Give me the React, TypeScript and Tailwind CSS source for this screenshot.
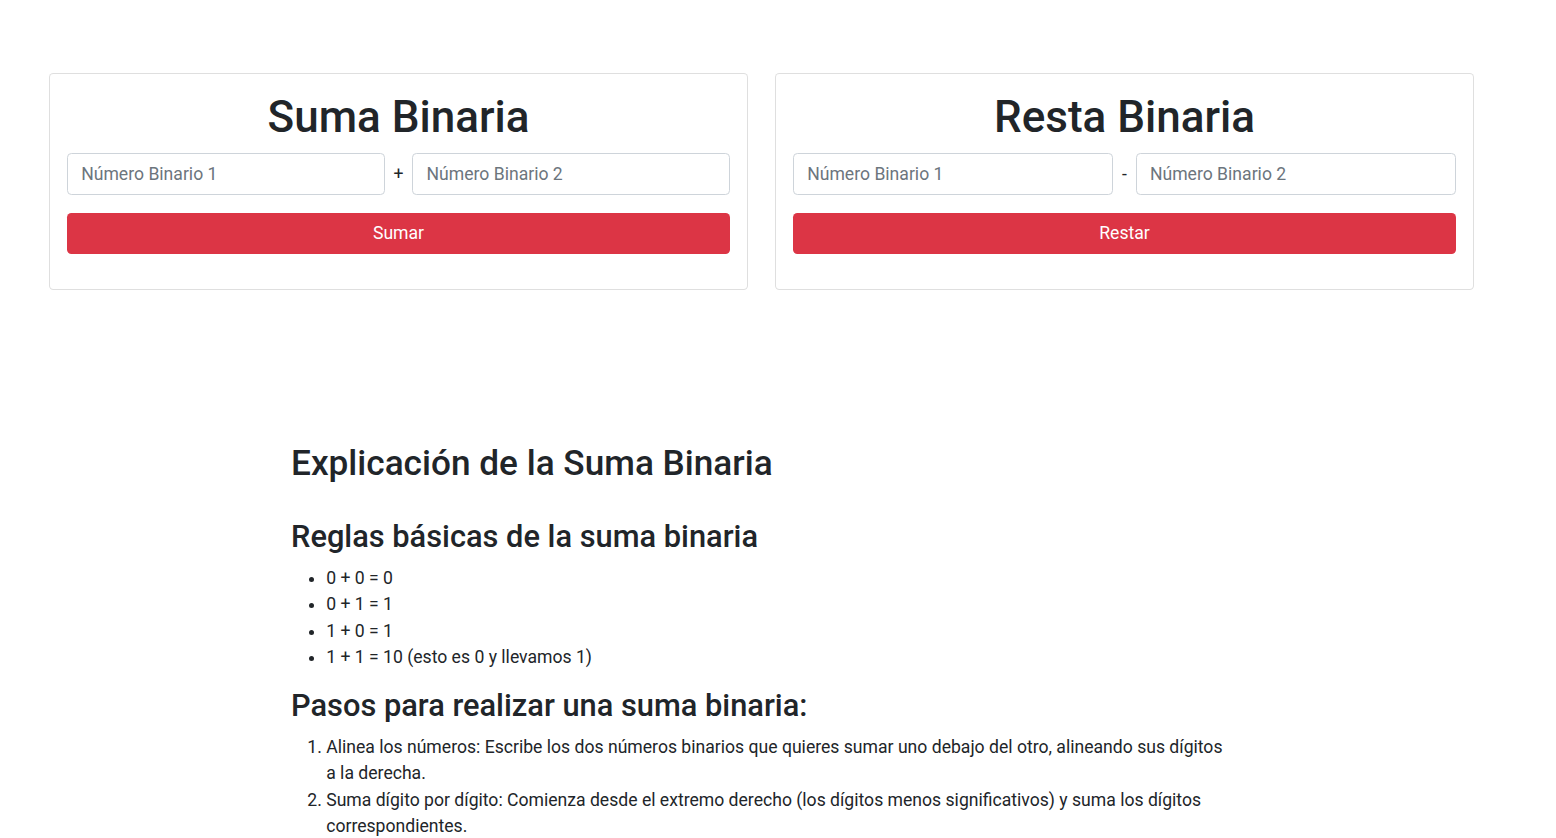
import { useState } from 'react';

// Sizes are Bootstrap defaults seen at 110% zoom (1rem = 17.6px)
const FONT = { fontFamily: 'Roboto, "Liberation Sans", sans-serif' };

function OpCard({ title, sign, action }: { title: string; sign: string; action: string }) {
  const [a, setA] = useState('');
  const [b, setB] = useState('');
  return (
    <div className="w-[699px] border border-[rgba(0,0,0,0.125)] rounded-[4.4px] bg-white pt-[16.6px] pb-[16.6px] px-[17px]">
      <h1 className="text-center text-[44px] leading-[1.2] font-medium text-[#212529] mb-[9.8px]">{title}</h1>
      <div className="flex items-center">
        <input
          value={a}
          onChange={(e) => setA(e.target.value)}
          placeholder="Número Binario 1"
          className="flex-1 min-w-0 h-[41.8px] px-[13.2px] text-[17.6px] text-[#495057] placeholder:text-[#6c757d] border border-[#ced4da] rounded-[4.4px] outline-none"
        />
        <span className="mx-[8.8px] text-[17.6px] text-[#212529]">{sign}</span>
        <input
          value={b}
          onChange={(e) => setB(e.target.value)}
          placeholder="Número Binario 2"
          className="flex-1 min-w-0 h-[41.8px] px-[13.2px] text-[17.6px] text-[#495057] placeholder:text-[#6c757d] border border-[#ced4da] rounded-[4.4px] outline-none"
        />
      </div>
      <button className="mt-[17.6px] mb-[17.6px] w-full h-[41.8px] bg-[#dc3545] text-white text-[17.6px] rounded-[4.4px]">
        {action}
      </button>
    </div>
  );
}

export default function App() {
  return (
    <div className="min-h-screen bg-white text-[#212529] text-[17.6px] leading-[1.5]" style={FONT}>
      <div className="flex gap-[27px] pl-[49px] pt-[73px]">
        <OpCard title="Suma Binaria" sign="+" action="Sumar" />
        <OpCard title="Resta Binaria" sign="-" action="Restar" />
      </div>

      <div className="ml-[291px] w-[940px]">
        <h2 className="mt-[152px] mb-[35.4px] text-[35.2px] leading-[1.2] font-medium">
          Explicación de la Suma Binaria
        </h2>
        <h3 className="mb-[8.8px] text-[30.8px] leading-[1.2] font-medium">Reglas básicas de la suma binaria</h3>
        <ul className="list-disc pl-[35.2px] mb-[17.6px]">
          <li>0 + 0 = 0</li>
          <li>0 + 1 = 1</li>
          <li>1 + 0 = 1</li>
          <li>1 + 1 = 10 (esto es 0 y llevamos 1)</li>
        </ul>
        <h3 className="mb-[8.8px] text-[30.8px] leading-[1.2] font-medium">Pasos para realizar una suma binaria:</h3>
        <ol className="list-decimal pl-[35.2px]">
          <li>
            Alinea los números: Escribe los dos números binarios que quieres sumar uno debajo del otro, alineando sus
            dígitos a la derecha.
          </li>
          <li>
            Suma dígito por dígito: Comienza desde el extremo derecho (los dígitos menos significativos) y suma los
            dígitos correspondientes.
          </li>
        </ol>
      </div>
    </div>
  );
}
